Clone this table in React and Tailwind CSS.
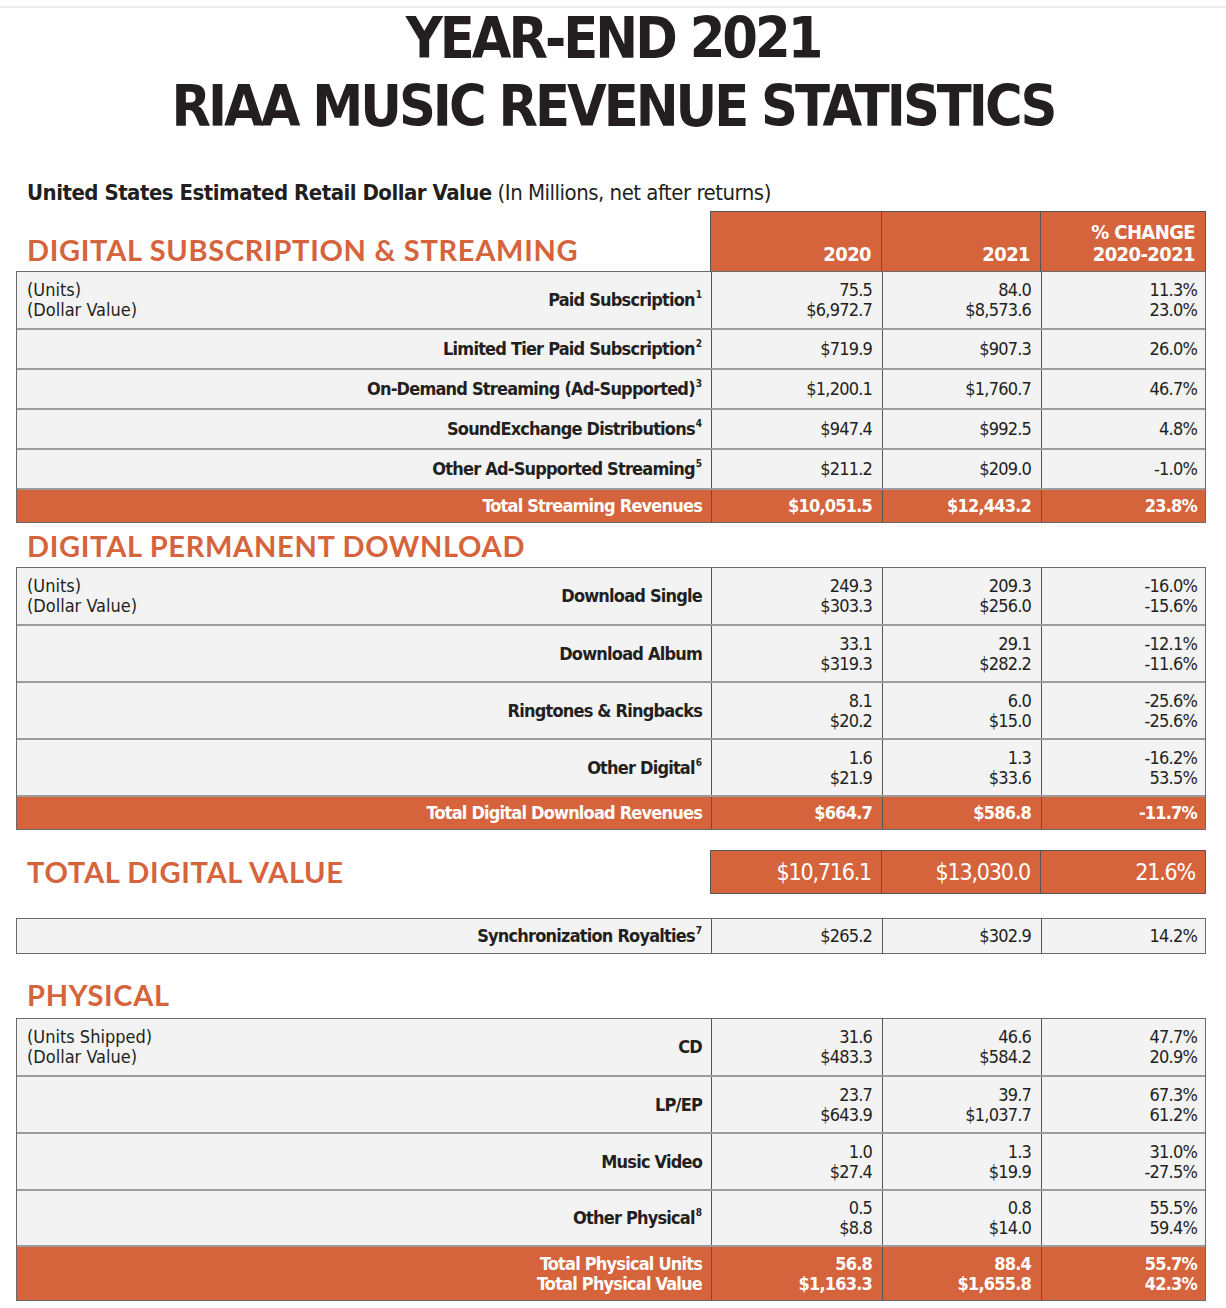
import React from "react";

const cond = "font-['DejaVu_Sans_Condensed','DejaVu_Sans',sans-serif]";
const head = "font-['Lato',sans-serif] font-bold text-[29px] leading-[34px] text-[#d5643c] tracking-[0.7px]";
const cols = "grid grid-cols-[694px_171px_159px_166px]";

const streaming = [
  { label: "Paid Subscription", sup: "1", note: ["(Units)", "(Dollar Value)"], a: ["75.5", "$6,972.7"], b: ["84.0", "$8,573.6"], c: ["11.3%", "23.0%"], h: "h-[56px]" },
  { label: "Limited Tier Paid Subscription", sup: "2", a: ["$719.9"], b: ["$907.3"], c: ["26.0%"], h: "h-[40px]" },
  { label: "On-Demand Streaming (Ad-Supported)", sup: "3", a: ["$1,200.1"], b: ["$1,760.7"], c: ["46.7%"], h: "h-[40px]" },
  { label: "SoundExchange Distributions", sup: "4", a: ["$947.4"], b: ["$992.5"], c: ["4.8%"], h: "h-[40px]" },
  { label: "Other Ad-Supported Streaming", sup: "5", a: ["$211.2"], b: ["$209.0"], c: ["-1.0%"], h: "h-[40px]" },
  { label: "Total Streaming Revenues", total: true, a: ["$10,051.5"], b: ["$12,443.2"], c: ["23.8%"], h: "h-[34px]" },
];

const downloads = [
  { label: "Download Single", note: ["(Units)", "(Dollar Value)"], a: ["249.3", "$303.3"], b: ["209.3", "$256.0"], c: ["-16.0%", "-15.6%"], h: "h-[56px]" },
  { label: "Download Album", a: ["33.1", "$319.3"], b: ["29.1", "$282.2"], c: ["-12.1%", "-11.6%"], h: "h-[57px]" },
  { label: "Ringtones & Ringbacks", a: ["8.1", "$20.2"], b: ["6.0", "$15.0"], c: ["-25.6%", "-25.6%"], h: "h-[57px]" },
  { label: "Other Digital", sup: "6", a: ["1.6", "$21.9"], b: ["1.3", "$33.6"], c: ["-16.2%", "53.5%"], h: "h-[57px]" },
  { label: "Total Digital Download Revenues", total: true, a: ["$664.7"], b: ["$586.8"], c: ["-11.7%"], h: "h-[34px]" },
];

const physical = [
  { label: "CD", note: ["(Units Shipped)", "(Dollar Value)"], a: ["31.6", "$483.3"], b: ["46.6", "$584.2"], c: ["47.7%", "20.9%"], h: "h-[56px]" },
  { label: "LP/EP", a: ["23.7", "$643.9"], b: ["39.7", "$1,037.7"], c: ["67.3%", "61.2%"], h: "h-[57px]" },
  { label: "Music Video", a: ["1.0", "$27.4"], b: ["1.3", "$19.9"], c: ["31.0%", "-27.5%"], h: "h-[57px]" },
  { label: "Other Physical", sup: "8", a: ["0.5", "$8.8"], b: ["0.8", "$14.0"], c: ["55.5%", "59.4%"], h: "h-[56px]" },
  { label: ["Total Physical Units", "Total Physical Value"], total: true, a: ["56.8", "$1,163.3"], b: ["88.4", "$1,655.8"], c: ["55.7%", "42.3%"], h: "h-[55px]" },
];

function Lines({ items }) {
  return (
    <div className="flex flex-col items-end">
      {items.map((t) => (
        <span key={t}>{t}</span>
      ))}
    </div>
  );
}

function Row({ row, first }) {
  const tone = row.total ? "bg-[#d5643c] text-white font-bold" : "bg-[#f3f3f3] text-[#231f20]";
  const line = first ? "" : "border-t-2 border-[#9c9c9c]";
  const labels = Array.isArray(row.label) ? row.label : [row.label];
  return (
    <div className={`${cols} ${row.h} ${tone} ${line} text-[18px] leading-[20px]`}>
      <div className="flex items-center justify-between pl-[10px] pr-[9px]">
        <div className="flex flex-col">
          {(row.note || []).map((n) => (
            <span key={n}>{n}</span>
          ))}
        </div>
        <div className="flex flex-col items-end font-bold tracking-[-0.8px]">
          {labels.map((l) => (
            <span key={l}>
              {l}
              {row.sup && <sup className="text-[10px] -top-[8px] ml-[1px] tracking-normal">{row.sup}</sup>}
            </span>
          ))}
        </div>
      </div>
      {[row.a, row.b, row.c].map((v, i) => (
        <div key={i} className="flex items-center justify-end pr-[10px] border-l border-[#555] tracking-[-0.8px]">
          <Lines items={v} />
        </div>
      ))}
    </div>
  );
}

function Table({ rows }) {
  return (
    <div className="border border-[#6b6b6b]">
      {rows.map((r, i) => (
        <Row key={i} row={r} first={i === 0} />
      ))}
    </div>
  );
}

export default function App() {
  return (
    <div className={`w-[1226px] min-h-[1308px] bg-white ${cond} text-[#231f20]`}>
      <div className="pt-[6px]">
        <div className="h-[2px] bg-[#ebebeb]" />
      </div>

      <h1 className="-mt-[4px] text-center font-bold text-[57px] leading-[68px] text-[#231f20] tracking-[-3px]">
        YEAR-END 2021
        <br />
        RIAA MUSIC REVENUE STATISTICS
      </h1>

      <div className="pl-[16px] pr-[20px]">
        <p className="mt-[41px] pl-[11px] text-[22px] leading-[24px] tracking-[-0.5px]">
          <span className="font-bold">United States Estimated Retail Dollar Value</span> (In Millions, net after returns)
        </p>

        {/* Digital subscription & streaming */}
        <div className={`${cols} h-[60px] mt-[6px]`}>
          <div className="flex items-end pb-[4px] pl-[11px]">
            <h2 className={head}>DIGITAL SUBSCRIPTION &amp; STREAMING</h2>
          </div>
          {[["2020"], ["2021"], ["% CHANGE", "2020-2021"]].map((h, i) => (
            <div
              key={i}
              className="flex items-end justify-end pr-[10px] pb-[6px] bg-[#d5643c] text-white font-bold text-[20px] leading-[22px] tracking-[-0.6px] border-t border-l border-[#555] last:border-r"
            >
              <Lines items={h} />
            </div>
          ))}
        </div>
        <Table rows={streaming} />

        {/* Digital permanent download */}
        <div className="h-[44px] flex items-end pb-[4px] pl-[11px]">
          <h2 className={head}>DIGITAL PERMANENT DOWNLOAD</h2>
        </div>
        <Table rows={downloads} />

        {/* Total digital value */}
        <div className={`${cols} h-[44px] mt-[20px]`}>
          <div className="flex items-center pl-[11px]">
            <h2 className={head}>TOTAL DIGITAL VALUE</h2>
          </div>
          {["$10,716.1", "$13,030.0", "21.6%"].map((v, i) => (
            <div
              key={i}
              className="flex items-center justify-end pr-[10px] bg-[#d5643c] text-white text-[23px] tracking-[-1.2px] border-y border-l border-[#555] last:border-r"
            >
              {v}
            </div>
          ))}
        </div>

        <div className="mt-[24px]">
          <Table
            rows={[{ label: "Synchronization Royalties", sup: "7", a: ["$265.2"], b: ["$302.9"], c: ["14.2%"], h: "h-[34px]" }]}
          />
        </div>

        {/* Physical */}
        <div className="h-[64px] flex items-end pb-[6px] pl-[11px]">
          <h2 className={head}>PHYSICAL</h2>
        </div>
        <Table rows={physical} />
      </div>
    </div>
  );
}
